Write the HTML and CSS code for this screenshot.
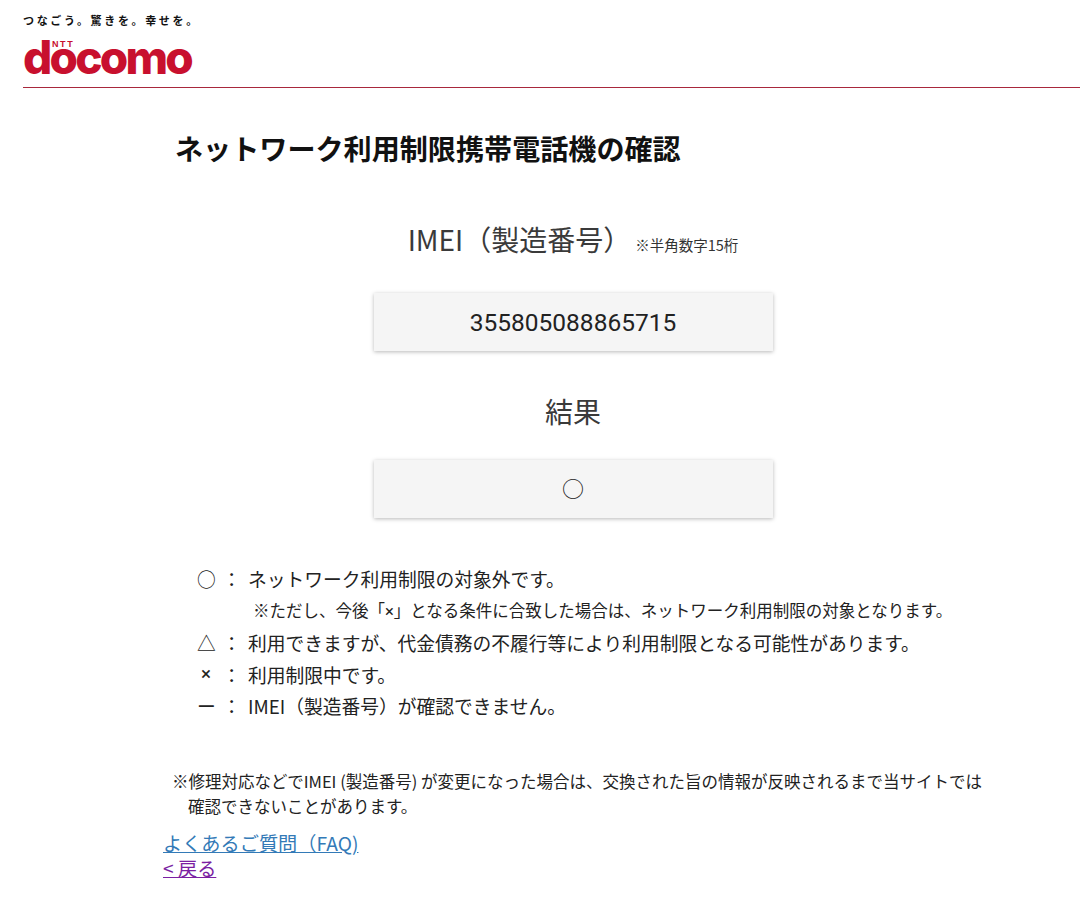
FILE: index.html
```html
<!DOCTYPE html>
<html lang="ja">
<head>
<meta charset="utf-8">
<title>ネットワーク利用制限携帯電話機の確認</title>
<link rel="stylesheet" href="styles.css">
</head>
<body>
<header class="site-header">
  <div class="tagline">つなごう。驚きを。幸せを。</div>
  <div class="logo"><span class="ntt">NTT</span><span class="wordmark">docomo</span></div>
</header>
<main class="main">
  <h1 class="title">ネットワーク利用制限携帯電話機の確認</h1>
  <section class="check">
    <div class="label">IMEI（製造番号）<small class="hint">※半角数字15桁</small></div>
    <div class="field">355805088865715</div>
    <div class="label label-result">結果</div>
    <div class="field field-result">○</div>
  </section>
  <ul class="legend">
    <li class="row"><span class="mark">○</span><span class="colon">：</span><span>ネットワーク利用制限の対象外です。</span></li>
    <li class="sub">※ただし、今後「<span class="cross">×</span>」となる条件に合致した場合は、ネットワーク利用制限の対象となります。</li>
    <li class="row"><span class="mark">△</span><span class="colon">：</span><span>利用できますが、代金債務の不履行等により利用制限となる可能性があります。</span></li>
    <li class="row"><span class="mark cross">×</span><span class="colon">：</span><span>利用制限中です。</span></li>
    <li class="row"><span class="mark">ー</span><span class="colon">：</span><span>IMEI（製造番号）が確認できません。</span></li>
  </ul>
  <p class="note">※修理対応などでIMEI (製造番号) が変更になった場合は、交換された旨の情報が反映されるまで当サイトでは<br>確認できないことがあります。</p>
  <nav class="links">
    <a class="faq" href="#faq">よくあるご質問（FAQ)</a>
    <a class="back" href="#back">&lt; 戻る</a>
  </nav>
</main>
</body>
</html>
```

FILE: styles.css
```css
* { box-sizing: border-box; }
html, body { margin: 0; padding: 0; background: #fff; }
body {
  font-family: "Noto Sans CJK JP", "Noto Sans", sans-serif;
  color: #222;
  height: 917px;
  overflow: hidden;
}
.site-header {
  margin-left: 23px;
  height: 88px;
  border-bottom: 1px solid #a8283c;
  padding-top: 12px;
}
.tagline {
  font-size: 11px;
  line-height: 16px;
  font-weight: 700;
  letter-spacing: 2.65px;
  color: #111;
}
.logo { position: relative; height: 56px; padding-top: 6px; }
.wordmark {
  display: block;
  font-family: "Inter", "Liberation Sans", sans-serif;
  font-weight: 800;
  font-size: 46px;
  line-height: 46px;
  letter-spacing: -2.8px;
  color: #c8102e;
}
.ntt {
  position: absolute;
  left: 29px;
  top: 11px;
  font-family: "Liberation Sans", sans-serif;
  font-size: 9px;
  line-height: 10px;
  font-weight: 700;
  letter-spacing: 1.6px;
  color: #c8102e;
}
.main { margin-left: 163px; width: 820px; }
.title {
  margin: 0;
  padding: 38px 0 0 12px;
  font-size: 28.1px;
  line-height: 44px;
  font-weight: 700;
  color: #111;
}
.check {
  display: flex;
  flex-direction: column;
  align-items: center;
  padding-top: 48px;
}
.label {
  font-size: 28px;
  line-height: 42px;
  font-weight: 400;
  color: #3a3a3a;
}
.hint { font-size: 14.5px; margin-left: 4px; color: #333; }
.field {
  width: 399px;
  height: 58px;
  margin-top: 27px;
  display: flex;
  align-items: center;
  justify-content: center;
  background: #f5f5f5;
  box-shadow: 0 1px 4px rgba(0, 0, 0, 0.28);
  font-family: "Roboto", "Noto Sans CJK JP", sans-serif;
  font-size: 24.5px;
  color: #222;
}
.field-result {
  font-family: "Noto Sans CJK JP", sans-serif;
  font-size: 22px;
  margin-top: 28px;
  padding-bottom: 4px;
}
.label-result { margin-top: 39px; }
.legend {
  list-style: none;
  margin: 0;
  padding: 45px 0 0 34px;
  font-size: 18.75px;
  line-height: 31.5px;
  color: #222;
}
.row { display: flex; }
.mark { width: 18px; text-align: center; flex: none; }
.colon { width: 33px; text-align: center; flex: none; }
.cross { font-family: "Roboto", sans-serif; }
.sub { font-size: 16.5px; padding-left: 56px; line-height: 31.5px; }
.note {
  margin: 47px 0 0 9px;
  padding-left: 16px;
  text-indent: -16px;
  font-size: 16.5px;
  line-height: 25px;
  color: #222;
  white-space: nowrap;
}
.links {
  display: flex;
  flex-direction: column;
  align-items: flex-start;
  padding-top: 12px;
  font-size: 19.2px;
  line-height: 25px;
}
.faq { color: #337ab7; text-decoration: underline; }
.back { color: #7b1fa2; text-decoration: underline; }
```
